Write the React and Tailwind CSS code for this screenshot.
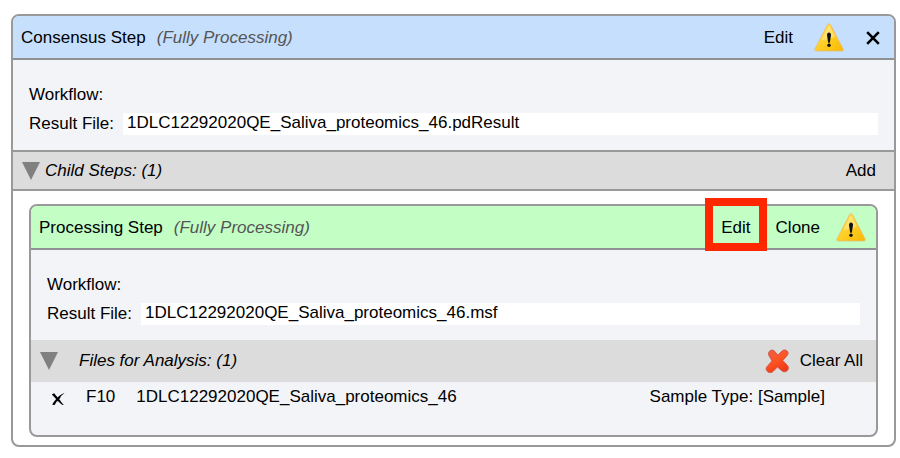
import { useId } from "react";

function WarningIcon() {
  const id = useId();
  return (
    <svg viewBox="0 0 30 30" className="h-[30px] w-[30px]" role="img" aria-label="Warning">
      <defs>
        <linearGradient id={id} x1="0" y1="0" x2="1" y2="1">
          <stop offset="0" stopColor="#ffe270" />
          <stop offset="0.5" stopColor="#ffcf26" />
          <stop offset="1" stopColor="#f9b800" />
        </linearGradient>
      </defs>
      <path
        d="M15 .8c.7 0 1.200.4 1.600 1.200L29 25.900c.6 1.200 0 2-1.200 2H2.200c-1.200 0-1.800-.8-1.200-2L13.400 2c.4-.8.9-1.200 1.600-1.200Z"
        fill={`url(#${id})`}
        stroke="#e6bb6a"
        strokeWidth="0.8"
      />
      <path d="M15 2.200 7.500 16.500c5.500 1 10.500-.5 13.500-3.500Z" fill="#fff3b0" opacity="0.45" />
      <path d="M13 12c0-1.700.8-2.600 2-2.600s2 .9 2 2.600l-1.200 7.800h-1.600Z" fill="#111" />
      <circle cx="15" cy="22.300" r="1.700" fill="#111" />
    </svg>
  );
}

function CrossIcon() {
  return (
    <svg viewBox="0 0 14 14" className="h-[14px] w-[14px]" aria-hidden="true">
      <path d="M1.200 1.200 12.800 12.800M12.800 1.200 1.200 12.800" stroke="#000" strokeWidth="2.600" fill="none" />
    </svg>
  );
}

function RemoveIcon() {
  return (
    <svg viewBox="0 0 14 14" className="h-[14px] w-[14px]" aria-hidden="true">
      <path d="M.8 2.600 3.200 1.200C5.500 4 9 8.500 12.800 13L11 12.800C7.500 10 4.500 6.500 .8 2.600Z" fill="#000" />
      <path d="M13.600 1C9.500 4 6 8.500 3.600 13L1.200 12.800C4 7.500 8.500 2.500 13.600 1Z" fill="#000" />
      <path d="M5 5 9 9.500M9 5 5.500 9" stroke="#000" strokeWidth="1.600" />
    </svg>
  );
}

function RedCrossIcon() {
  const id = useId();
  return (
    <svg viewBox="0 0 24 24" className="h-6 w-6" aria-hidden="true">
      <defs>
        <linearGradient id={id} x1="0" y1="0" x2="0.500" y2="1">
          <stop offset="0" stopColor="#e8604a" />
          <stop offset="0.550" stopColor="#ff5423" />
          <stop offset="1" stopColor="#f03c18" />
        </linearGradient>
      </defs>
      <path
        d="M4.200 2.600C5.400.8 8.200.6 9.600 2.200l3.200 4 4.400-4.400c1.500-1.200 3.600-1 4.900.2 1.400 1.300 1.300 3 .2 4.300l-4.500 5.200 4.800 5.200c1.200 1.700 1 3.600-.3 4.900-1.500 1.500-3.800 1.500-5.200.3l-4.700-3.900-4.300 4.400c-1.500 1.500-3.900 1.500-5.500.3-1.800-1.400-1.900-3.500-.6-5l5-5.800L4.200 7C3.200 5.400 3.200 4 4.200 2.600Z"
        fill={`url(#${id})`}
        stroke="#d2584a"
        strokeWidth="1"
      />
    </svg>
  );
}

function Triangle() {
  return (
    <svg viewBox="0 0 18 18" className="h-[18px] w-[18px]" aria-hidden="true">
      <path d="M0 0H18L9 18Z" fill="#808080" />
    </svg>
  );
}

function StepHeader({ title, color, children }) {
  return (
    <header className={`flex h-11 items-center rounded-t-md border-b-2 border-[#8f9194] pt-px pl-2 ${color}`}>
      <h2>{title}</h2>
      <span className="ml-[11px] flex-1 italic text-[#555]">(Fully Processing)</span>
      {children}
    </header>
  );
}

function StepDetails({ file }) {
  const id = useId();
  return (
    <div className="bg-[#f3f4f7] px-4 pt-5 pb-3">
      <div className="flex h-[29px] items-center">Workflow:</div>
      <div className="flex h-[29px] items-center gap-[9px]">
        <label htmlFor={id}>Result File:</label>
        <input
          id={id}
          readOnly
          defaultValue={file}
          className="h-[22px] min-w-0 flex-1 bg-white px-1 pb-[2px] outline-none"
        />
      </div>
    </div>
  );
}

export default function App() {
  return (
    <main className="bg-white pt-[14px] pr-1 pb-3 pl-[11px] font-['Liberation_Sans',Arial,sans-serif] text-[17px] leading-5 text-black">
      <section className="rounded-lg border-2 border-[#999]">
        <StepHeader title="Consensus Step" color="bg-[#c5dffd]">
          <div className="flex items-center pr-[14px]">
            <button type="button">Edit</button>
            <span className="mr-[22px] ml-[21px]">
              <WarningIcon />
            </span>
            <button type="button" aria-label="Close">
              <CrossIcon />
            </button>
          </div>
        </StepHeader>
        <StepDetails file="1DLC12292020QE_Saliva_proteomics_46.pdResult" />
        <div className="flex h-[41px] items-center border-y-2 border-[#999] bg-[#dcdcdc] pr-[18px] pl-[9px]">
          <button type="button" className="flex items-center gap-[5px] italic">
            <Triangle />
            Child Steps: (1)
          </button>
          <button type="button" className="ml-auto">Add</button>
        </div>
        <div className="px-4 pt-[13px] pb-2">
          <section className="rounded-lg border-2 border-[#999] bg-[#f3f4f7]">
            <StepHeader title="Processing Step" color="bg-[#c3fec5]">
              <div className="flex items-center pr-[10px]">
                <button type="button" className="relative">
                  Edit
                  <span className="absolute -inset-x-4 -top-5 -bottom-[13px] border-8 border-[#ff2600]" />
                </button>
                <button type="button" className="mr-4 ml-[25px]">Clone</button>
                <WarningIcon />
              </div>
            </StepHeader>
            <StepDetails file="1DLC12292020QE_Saliva_proteomics_46.msf" />
            <div className="flex h-[42px] items-center bg-[#dcdcdc] pr-[13px] pl-[9px]">
              <button type="button" className="flex items-center gap-[21px] italic">
                <Triangle />
                Files for Analysis: (1)
              </button>
              <button type="button" className="ml-auto flex items-center gap-[11px]">
                <RedCrossIcon />
                Clear All
              </button>
            </div>
            <div className="flex h-[53px] items-start pt-[5px] pr-[51px] pl-5">
              <button type="button" aria-label="Remove file" className="mt-[5px]">
                <RemoveIcon />
              </button>
              <span className="ml-[21px]">F10</span>
              <span className="ml-[21px]">1DLC12292020QE_Saliva_proteomics_46</span>
              <span className="ml-auto">Sample Type: [Sample]</span>
            </div>
          </section>
        </div>
      </section>
    </main>
  );
}
